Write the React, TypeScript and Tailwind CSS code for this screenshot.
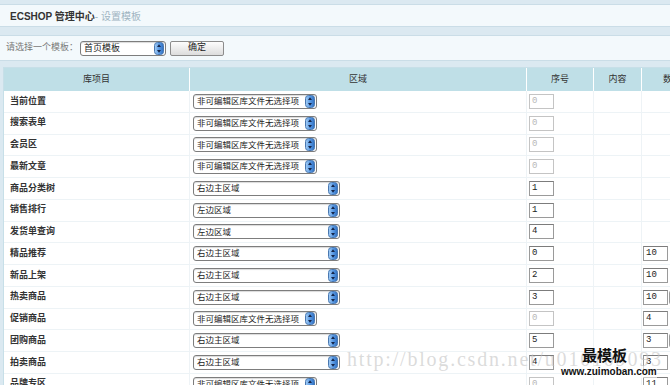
import React from "react";

const Arrow = () => (
  <svg width="10" height="13" viewBox="0 0 10 13" className="shrink-0">
    <defs>
      <linearGradient id="aq" x1="0" y1="0" x2="1" y2="0">
        <stop offset="0" stopColor="#a9d0f5" />
        <stop offset="0.5" stopColor="#5a9be6" />
        <stop offset="1" stopColor="#2f6fc0" />
      </linearGradient>
    </defs>
    <rect x="0.5" y="0.5" width="9" height="12" rx="3" fill="url(#aq)" stroke="#4a78b0" />
    <path d="M5 2.3 L7 5 H3 Z" fill="#15264a" />
    <path d="M5 10.7 L7 8 H3 Z" fill="#15264a" />
  </svg>
);

const Sel = ({ text, wide }: { text: string; wide?: boolean }) => (
  <div
    className={
      "flex items-center justify-between h-[15px] border border-[#7d7d7d] rounded-[3px] bg-white pl-[3px] pr-[1px] shadow-[inset_0_1px_1px_rgba(0,0,0,0.15)] " +
      (wide ? "w-[147px]" : "w-[124px]")
    }
  >
    <span className="text-[8.5px] leading-none text-[#222] whitespace-nowrap">{text}</span>
    <Arrow />
  </div>
);

const Inp = ({ v, dis }: { v: string; dis?: boolean }) => (
  <div
    className={
      "w-[25px] h-[15px] flex items-center pl-[2px] bg-white border font-['Liberation_Mono',monospace] text-[9px] leading-none " +
      (dis
        ? "border-[#c4c4c4] text-[#b8b8b8]"
        : "border-[#9a9a9a] border-t-[#7c7c7c] text-[#222]")
    }
  >
    {v}
  </div>
);

type Row = { name: string; sel: string; wide: boolean; seq: string; dis: boolean; qty?: string; extra?: boolean };

const SHORT = "非可编辑区库文件无选择项";
const rows: Row[] = [
  { name: "当前位置", sel: SHORT, wide: false, seq: "0", dis: true },
  { name: "搜索表单", sel: SHORT, wide: false, seq: "0", dis: true },
  { name: "会员区", sel: SHORT, wide: false, seq: "0", dis: true },
  { name: "最新文章", sel: SHORT, wide: false, seq: "0", dis: true },
  { name: "商品分类树", sel: "右边主区域", wide: true, seq: "1", dis: false },
  { name: "销售排行", sel: "左边区域", wide: true, seq: "1", dis: false },
  { name: "发货单查询", sel: "左边区域", wide: true, seq: "4", dis: false },
  { name: "精品推荐", sel: "右边主区域", wide: true, seq: "0", dis: false, qty: "10" },
  { name: "新品上架", sel: "右边主区域", wide: true, seq: "2", dis: false, qty: "10" },
  { name: "热卖商品", sel: "右边主区域", wide: true, seq: "3", dis: false, qty: "10", extra: true },
  { name: "促销商品", sel: SHORT, wide: false, seq: "0", dis: true, qty: "4" },
  { name: "团购商品", sel: "右边主区域", wide: true, seq: "5", dis: false, qty: "3", extra: true },
  { name: "拍卖商品", sel: "右边主区域", wide: true, seq: "4", dis: false, qty: "3" },
  { name: "品牌专区", sel: SHORT, wide: false, seq: "0", dis: true, qty: "11" },
];

const cols = "grid grid-cols-[186px_337px_67px_48px_80px]";

export default function App() {
  return (
    <div className="relative w-[670px] h-[385px] overflow-hidden bg-[#dbe9f1] font-['Liberation_Sans','Noto_Sans_CJK_SC',sans-serif] pt-[4px]">
      {/* title bar */}
      <div className="h-[23px] bg-[#f3f9fc] border-y border-[#cadde7] flex items-center pl-[10px] pt-[1px]">
        <span className="text-[10px] font-bold text-[#333]">ECSHOP 管理中心</span>
        <span className="text-[10px] text-[#9fb5c2]">- 设置模板</span>
      </div>
      {/* filter bar */}
      <div className="mt-[8px] h-[26px] bg-[#f3f9fc] border-y border-[#cadde7] flex items-center pl-[6px]">
        <span className="text-[9px] text-[#7a7a7a] w-[74px]">请选择一个模板：</span>
        <div className="flex items-center justify-between w-[86px] h-[15px] border border-[#7d7d7d] rounded-[3px] bg-white pl-[3px] pr-[1px] shadow-[inset_0_1px_1px_rgba(0,0,0,0.15)]">
          <span className="text-[9px] leading-none text-[#222]">首页模板</span>
          <Arrow />
        </div>
        <div className="ml-[4px] w-[54px] h-[15px] flex items-center justify-center border border-[#8c8c8c] rounded-[2px] bg-gradient-to-b from-[#fdfdfd] to-[#dcdcdc] text-[9px] text-[#222]">
          确定
        </div>
      </div>
      {/* table */}
      <div className="mt-[6px] ml-[3px] border-l border-t border-[#c7dfe8] bg-white">
        <div className={cols + " h-[23px] bg-[#bfdfe7] text-[9px] text-[#333]"}>
          <div className="flex items-center justify-center border-r border-white">库项目</div>
          <div className="flex items-center justify-center border-r border-white">区域</div>
          <div className="flex items-center justify-center border-r border-white">序号</div>
          <div className="flex items-center justify-center border-r border-white">内容</div>
          <div className="flex items-center justify-center pr-[20px]">数量</div>
        </div>
        {rows.map((r) => (
          <div key={r.name} className={cols + " h-[21.75px] border-b border-[#edf3f6]"}>
            <div className="flex items-center pl-[6px] border-r border-[#eef3f6] text-[9px] font-bold text-[#333]">
              {r.name}
            </div>
            <div className="flex items-center pl-[3px] border-r border-[#eef3f6]">
              <Sel text={r.sel} wide={r.wide} />
            </div>
            <div className="flex items-center pl-[2px] border-r border-[#eef3f6]">
              <Inp v={r.seq} dis={r.dis} />
            </div>
            <div className="border-r border-[#eef3f6]" />
            <div className="flex items-center pl-[1px] gap-[1px]">
              {r.qty && <Inp v={r.qty} />}
              {r.extra && <div className="w-[20px] h-[15px] border border-[#9a9a9a] rounded-[3px] bg-[#f4f4f4]" />}
            </div>
          </div>
        ))}
      </div>
      {/* watermark */}
      <div className="absolute left-[347px] top-[349px] text-[20px] leading-none tracking-[1.8px] text-[#c4c4c4]/60 font-['Liberation_Serif',serif] whitespace-nowrap">
        http://blog.csdn.net/u010109093
      </div>
      <div className="absolute left-[582px] top-[346px] text-[15px] leading-[18px] font-bold text-[#111] font-['Noto_Sans_CJK_SC',serif]">
        最模板
      </div>
      <div className="absolute left-[561px] top-[366px] text-[10px] leading-[12px] font-bold text-[#111] font-['Liberation_Sans',sans-serif] bg-white/60">
        www.zuimoban.com
      </div>
    </div>
  );
}
